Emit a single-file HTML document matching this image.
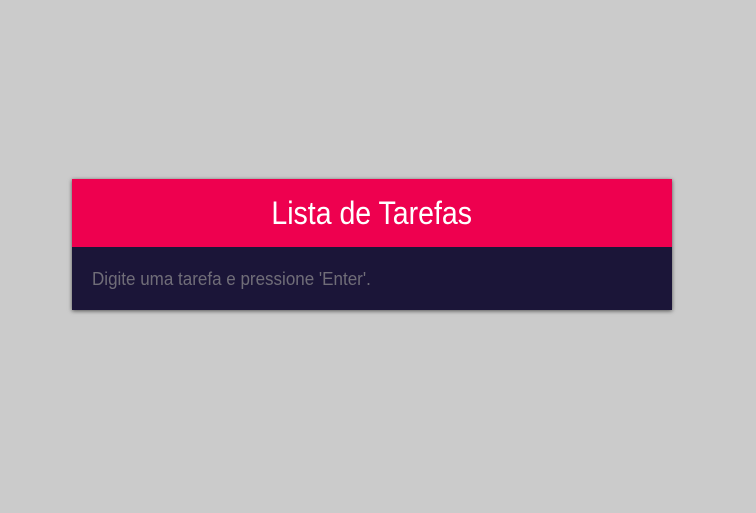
<!DOCTYPE html>
<html><head><style>
html,body{margin:0;padding:0;background:#cbcbcb;width:756px;height:513px;overflow:hidden}
.card{position:absolute;left:72px;top:179px;width:600px;height:131px;background:#1b1538;box-shadow:0 1px 4px rgba(0,0,0,.6)}
.head{height:68px;background:#ee004f;position:relative}
.t{position:absolute;left:0;right:0;top:14px;text-align:center;color:#fff;font:32px "Liberation Sans",sans-serif;line-height:40px}
.t span{display:inline-block;transform:scaleX(.89)}
.p{position:absolute;left:20px;top:90px;color:#706d78;font:18px "Liberation Sans",sans-serif;line-height:20px;transform-origin:0 0;transform:scaleX(.945);white-space:nowrap}
</style></head><body>
<div class="card"><div class="head"><div class="t"><span>Lista de Tarefas</span></div></div>
<div class="p">Digite uma tarefa e pressione 'Enter'.</div></div>
</body></html>
